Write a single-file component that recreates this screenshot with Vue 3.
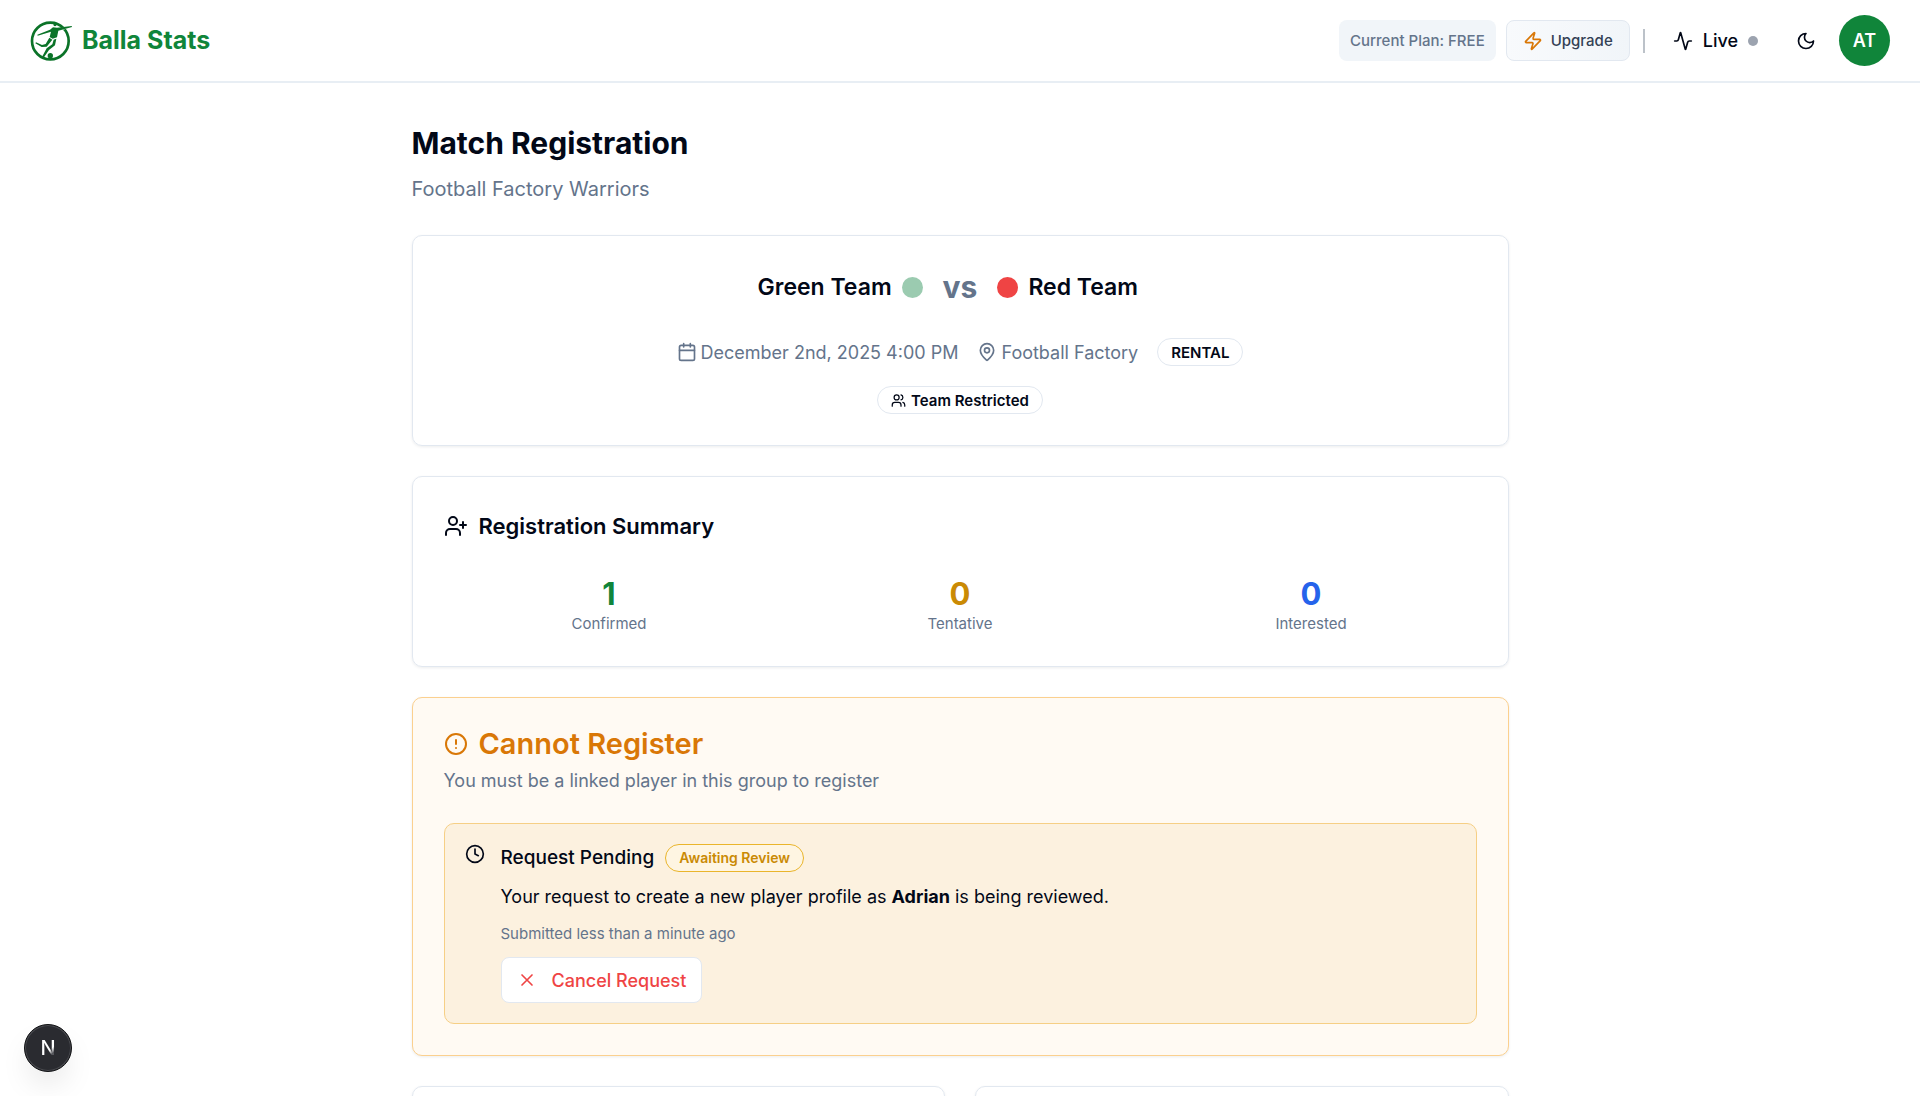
<template>
  <div class="page">
    <header class="topbar">
      <a class="brand" href="#">
        <svg class="brand-logo" viewBox="30 28 126 126" aria-hidden="true">
          <circle cx="91" cy="91" r="55" fill="none" stroke="currentColor" stroke-width="8" />
          <path d="M126 55l28-9" stroke="#fff" stroke-width="7" />
          <g fill="currentColor">
            <ellipse cx="105" cy="40" rx="5" ry="7" />
            <path d="M99 50l12 1 44-5 1 3-41 11-4 20-13 4-9-5 4-16-40 12-1-3 38-15z" />
            <path d="M88 81l9 6-17 21-15 1-19-11 2-3 18 8 11-3z" />
            <path d="M101 87l8-3-4 20-18 14-15 22 8 5-10-1-4-5 14-26 17-12z" />
            <circle cx="91" cy="135" r="8" />
          </g>
        </svg>
        <span>Balla Stats</span>
      </a>
      <nav class="actions">
        <span class="plan">Current Plan: FREE</span>
        <button class="upgrade" type="button">
          <svg class="icon amber" viewBox="0 0 24 24">
            <path d="M4 14a1 1 0 0 1-.78-1.63l9.9-10.2a.5.5 0 0 1 .86.46l-1.92 6.02A1 1 0 0 0 13 10h7a1 1 0 0 1 .78 1.63l-9.9 10.2a.5.5 0 0 1-.86-.46l1.92-6.02A1 1 0 0 0 11 14z" />
          </svg>
          Upgrade
        </button>
        <span class="divider"></span>
        <a class="live" href="#">
          <svg class="icon" viewBox="0 0 24 24">
            <path d="M22 12h-2.48a2 2 0 0 0-1.93 1.46l-2.35 8.36a.25.25 0 0 1-.48 0L9.24 2.18a.25.25 0 0 0-.48 0l-2.35 8.36A2 2 0 0 1 4.49 12H2" />
          </svg>
          Live
          <span class="live-dot"></span>
        </a>
        <button class="theme" type="button" aria-label="Toggle theme">
          <svg class="icon" viewBox="0 0 24 24">
            <path d="M12 3a6 6 0 0 0 9 9 9 9 0 1 1-9-9Z" />
          </svg>
        </button>
        <button class="avatar" type="button">AT</button>
      </nav>
    </header>

    <main class="content">
      <div class="heading">
        <h1>Match Registration</h1>
        <p>Football Factory Warriors</p>
      </div>

      <section class="card match">
        <div class="teams">
          <div class="team home">Green Team <span class="dot green"></span></div>
          <span class="versus">vs</span>
          <div class="team"><span class="dot red"></span> Red Team</div>
        </div>
        <div class="meta">
          <span class="meta-item">
            <svg class="icon" viewBox="0 0 24 24">
              <path d="M8 2v4M16 2v4M3 10h18" />
              <rect width="18" height="18" x="3" y="4" rx="2" />
            </svg>
            December 2nd, 2025 4:00 PM
          </span>
          <span class="meta-item">
            <svg class="icon" viewBox="0 0 24 24">
              <path d="M20 10c0 4.993-5.539 10.193-7.399 11.799a1 1 0 0 1-1.202 0C9.539 20.193 4 14.993 4 10a8 8 0 0 1 16 0" />
              <circle cx="12" cy="10" r="3" />
            </svg>
            Football Factory
          </span>
          <span class="badge">RENTAL</span>
        </div>
        <span class="badge">
          <svg class="icon small" viewBox="0 0 24 24">
            <path d="M16 21v-2a4 4 0 0 0-4-4H6a4 4 0 0 0-4 4v2" />
            <circle cx="9" cy="7" r="4" />
            <path d="M22 21v-2a4 4 0 0 0-3-3.87M16 3.13a4 4 0 0 1 0 7.75" />
          </svg>
          Team Restricted
        </span>
      </section>

      <section class="card">
        <h2 class="summary-title">
          <svg class="icon large" viewBox="0 0 24 24">
            <path d="M16 21v-2a4 4 0 0 0-4-4H6a4 4 0 0 0-4 4v2" />
            <circle cx="9" cy="7" r="4" />
            <path d="M19 8v6M22 11h-6" />
          </svg>
          Registration Summary
        </h2>
        <div class="stats">
          <div v-for="stat in stats" :key="stat.label" class="stat">
            <strong :class="stat.color">{{ stat.total }}</strong>
            <span>{{ stat.label }}</span>
          </div>
        </div>
      </section>

      <section class="card warning">
        <h2 class="warning-title">
          <svg class="icon large" viewBox="0 0 24 24">
            <circle cx="12" cy="12" r="10" />
            <path d="M12 8v4M12 16h.01" />
          </svg>
          Cannot Register
        </h2>
        <p class="warning-text">You must be a linked player in this group to register</p>
        <div class="request">
          <svg class="icon" viewBox="0 0 24 24">
            <circle cx="12" cy="12" r="10" />
            <path d="M12 6v6l4 2" />
          </svg>
          <div class="request-body">
            <h3>Request Pending <span class="badge pending">Awaiting Review</span></h3>
            <p>
              Your request to create a new player profile as <strong>Adrian</strong> is being
              reviewed.
            </p>
            <small>Submitted less than a minute ago</small>
            <button class="cancel" type="button">
              <svg class="icon" viewBox="0 0 24 24"><path d="M18 6 6 18M6 6l12 12" /></svg>
              Cancel Request
            </button>
          </div>
        </div>
      </section>

      <div class="lists">
        <section class="card"></section>
        <section class="card"></section>
      </div>
    </main>

    <button class="devtools" type="button"><span>N</span></button>
  </div>
</template>

<script setup>
const stats = [
  { label: 'Confirmed', total: 1, color: 'green' },
  { label: 'Tentative', total: 0, color: 'yellow' },
  { label: 'Interested', total: 0, color: 'blue' },
]
</script>

<style>
body {
  margin: 0;
  background: #fff;
}
</style>

<style scoped>
* {
  box-sizing: border-box;
}
.page {
  height: 100vh;
  overflow: hidden;
  color: #020817;
  font-family: Inter, 'Liberation Sans', sans-serif;
  font-size: 18px;
  line-height: 27px;
}
h1,
h2,
h3,
p {
  margin: 0;
}
button {
  font: inherit;
  color: inherit;
  cursor: pointer;
}
a {
  color: inherit;
  text-decoration: none;
}
.icon {
  width: 20px;
  height: 20px;
  flex: none;
  fill: none;
  stroke: currentColor;
  stroke-width: 2;
  stroke-linecap: round;
  stroke-linejoin: round;
}
.icon.small {
  width: 15px;
  height: 15px;
}
.icon.large {
  width: 24px;
  height: 24px;
}
.amber {
  color: #d97706;
}

/* Header */
.topbar {
  display: flex;
  align-items: center;
  justify-content: space-between;
  height: 83px;
  padding: 0 30px;
  border-bottom: 2px solid #e8eef4;
}
.brand {
  display: flex;
  align-items: center;
  gap: 10px;
  color: #10853a;
  font-size: 25px;
  font-weight: 700;
}
.brand-logo {
  width: 42px;
  height: 42px;
  color: #0b7328;
}
.actions {
  display: flex;
  align-items: center;
}
.plan,
.upgrade {
  display: flex;
  align-items: center;
  height: 41px;
  border-radius: 8px;
  font-size: 15px;
  font-weight: 500;
}
.plan {
  padding: 0 11px;
  background: #f1f5f9;
  color: #64748b;
}
.upgrade {
  gap: 8px;
  margin-left: 10px;
  padding: 0 16px;
  border: 1px solid #e2e8f0;
  background: linear-gradient(90deg, #f8fafc, #f1f5f9);
  color: #334155;
}
.divider {
  width: 2px;
  height: 24px;
  margin: 0 28px 0 13px;
  background: #bcc2c9;
}
.live {
  display: flex;
  align-items: center;
  gap: 10px;
  font-weight: 500;
}
.live-dot {
  width: 10px;
  height: 10px;
  border-radius: 50%;
  background: #9ca3af;
}
.theme {
  display: flex;
  padding: 10px;
  margin: 0 13px 0 28px;
  border: 0;
  background: none;
}
.avatar {
  width: 51px;
  height: 51px;
  padding: 0;
  border: 0;
  border-radius: 50%;
  background: #10853a;
  color: #fff;
  font-weight: 600;
}

/* Page content */
.content {
  max-width: 1097px;
  margin: 0 auto;
  padding: 39px 0;
}
.heading {
  margin-bottom: 31px;
}
.heading h1 {
  font-size: 30px;
  line-height: 42px;
}
.heading p {
  margin-top: 10px;
  color: #64748b;
  font-size: 20px;
  line-height: 30px;
}
.card {
  margin-bottom: 30px;
  padding: 31px;
  border: 1px solid #e2e8f0;
  border-radius: 10px;
  box-shadow: 0 1px 3px rgba(15, 23, 42, 0.08);
}
.match {
  display: flex;
  flex-direction: column;
  align-items: center;
}
.teams {
  display: grid;
  grid-template-columns: 1fr auto 1fr;
  align-items: center;
  gap: 20px;
  align-self: stretch;
  height: 40px;
}
.team {
  display: flex;
  align-items: center;
  gap: 10px;
  font-size: 23px;
  font-weight: 600;
}
.home {
  justify-content: flex-end;
}
.dot {
  width: 21px;
  height: 21px;
  border-radius: 50%;
}
.dot.green {
  background: #9bcbb0;
}
.dot.red {
  background: #ef4444;
}
.versus {
  color: #64748b;
  font-size: 30px;
  font-weight: 700;
}
.meta {
  display: flex;
  align-items: center;
  gap: 19px;
  margin: 31px 0 20px;
  color: #64748b;
}
.meta-item {
  display: flex;
  align-items: center;
  gap: 4px;
}
.badge {
  display: inline-flex;
  align-items: center;
  gap: 5px;
  height: 28px;
  padding: 0 13px;
  border: 1px solid #e2e8f0;
  border-radius: 14px;
  color: #020817;
  font-size: 15px;
  font-weight: 600;
}

/* Summary */
.summary-title {
  display: flex;
  align-items: center;
  gap: 11px;
  font-size: 22px;
  font-weight: 600;
  line-height: 36px;
}
.stats {
  display: grid;
  grid-template-columns: repeat(3, 1fr);
  gap: 20px;
  margin-top: 32px;
}
.stat {
  display: flex;
  flex-direction: column;
  align-items: center;
}
.stat strong {
  font-size: 31px;
  line-height: 36px;
}
.stat span {
  color: #64748b;
  font-size: 15px;
  line-height: 23px;
}
.stat .green {
  color: #10853a;
}
.stat .yellow {
  color: #ca8a04;
}
.stat .blue {
  color: #2563eb;
}

/* Pending request */
.warning {
  border-color: #fbd08f;
  background: #fffaf3;
}
.warning-title {
  display: flex;
  align-items: center;
  gap: 11px;
  color: #d97706;
  font-size: 29px;
  font-weight: 600;
  line-height: 30px;
}
.warning-text {
  margin: 8px 0 29px;
  color: #64748b;
}
.request {
  display: flex;
  gap: 16px;
  padding: 20px;
  border: 1px solid #f6cf85;
  border-radius: 10px;
  background: #fcf1df;
}
.request-body {
  display: flex;
  flex-direction: column;
  align-items: flex-start;
}
.request h3 {
  display: flex;
  align-items: center;
  gap: 11px;
  font-size: 19px;
  font-weight: 500;
  line-height: 28px;
}
.request p {
  margin: 11px 0 12px;
}
.request strong {
  font-weight: 700;
}
.request small {
  color: #64748b;
  font-size: 15px;
  line-height: 24px;
}
.pending {
  border-color: #eab52b;
  background: #fef5e2;
  color: #ca8a04;
  font-size: 14px;
}
.cancel {
  display: flex;
  align-items: center;
  gap: 15px;
  height: 46px;
  margin-top: 11px;
  padding: 0 15px;
  border: 1px solid #e2e8f0;
  border-radius: 8px;
  background: #fff;
  color: #ef4444;
  font-weight: 500;
}
.lists {
  display: grid;
  grid-template-columns: 1fr 1fr;
  gap: 30px;
}
.lists .card {
  min-height: 200px;
}

/* Floating button */
.devtools {
  position: fixed;
  bottom: 24px;
  left: 24px;
  width: 48px;
  height: 48px;
  padding: 0;
  border: 1px solid #111214;
  border-radius: 50%;
  background: #2a2b30;
  box-shadow:
    inset 0 0 0 1px #4a4b50,
    0 16px 32px -8px rgba(0, 0, 0, 0.15);
}
.devtools span {
  background: linear-gradient(135deg, #fff 60%, #55565b 75%);
  background-clip: text;
  color: transparent;
  font-size: 20px;
  font-weight: 500;
}
</style>
